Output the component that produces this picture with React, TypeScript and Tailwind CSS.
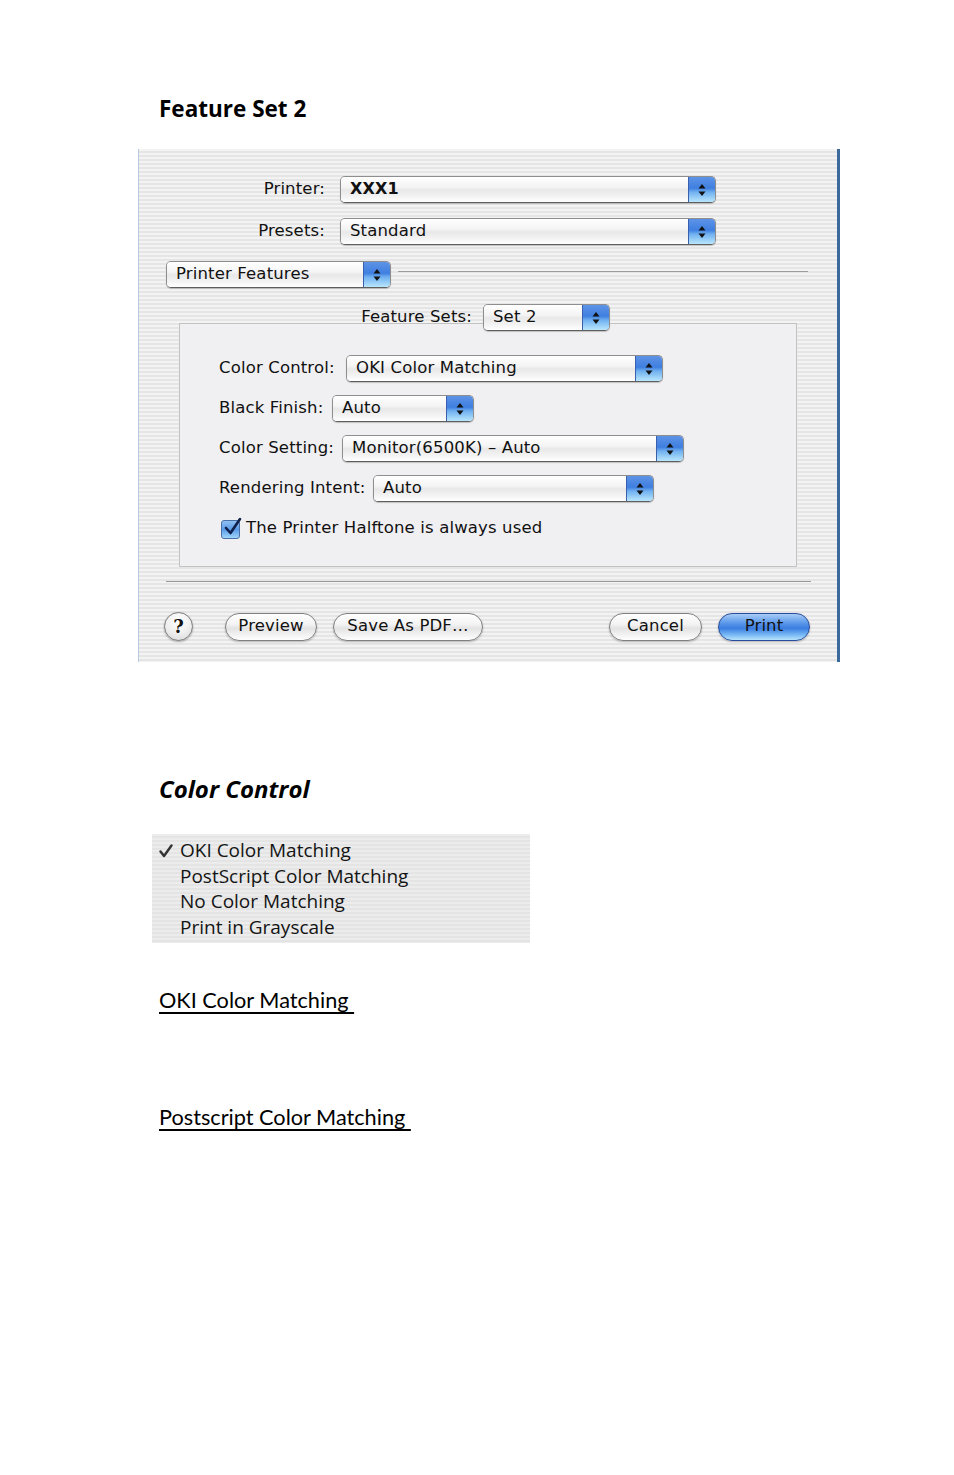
import React from "react";

const stripes =
  "bg-[repeating-linear-gradient(180deg,#f3f3f3_0px,#f3f3f3_2px,#e5e5e5_2px,#e5e5e5_4px)]";

function Arrows() {
  return (
    <svg width="8" height="14" viewBox="0 0 8 14">
      <polygon points="4,1 7.5,5.5 0.5,5.5" fill="#111" />
      <polygon points="4,13 7.5,8.5 0.5,8.5" fill="#111" />
    </svg>
  );
}

function Popup({ text, className, bold }: { text: string; className: string; bold?: boolean }) {
  return (
    <div
      className={
        "flex h-[27px] rounded-[5px] border border-[#8e8e8e] border-b-[#5e5e5e] shadow-[0_1px_1px_rgba(0,0,0,0.2)] overflow-hidden " +
        className
      }
    >
      <div className="flex-1 flex items-center pl-[9px] pb-[1px] bg-[linear-gradient(180deg,#ffffff_0%,#f4f4f4_40%,#e8e8e8_52%,#f4f4f4_80%,#ffffff_100%)]">
        <span className={"whitespace-nowrap " + (bold ? "font-bold text-[16px]" : "")}>{text}</span>
      </div>
      <div className="w-[27px] flex items-center justify-center border-l border-[#3a5fae] bg-[linear-gradient(180deg,#5d93e6_0%,#3f7fe0_45%,#6fb0f0_60%,#b9e6fc_100%)]">
        <Arrows />
      </div>
    </div>
  );
}

function Pill({ text, className, blue }: { text: string; className: string; blue?: boolean }) {
  return (
    <div
      className={
        "h-[28px] rounded-full flex items-center justify-center pb-[1px] whitespace-nowrap shadow-[0_1px_2px_rgba(0,0,0,0.25)] " +
        (blue
          ? "border border-[#2a4c9e] bg-[linear-gradient(180deg,#a9cdf7_0%,#5a97ea_35%,#3a7de0_55%,#78b8f4_80%,#b8e4fc_100%)] "
          : "border border-[#7f7f7f] bg-[linear-gradient(180deg,#ffffff_0%,#f3f3f3_40%,#e3e3e3_55%,#f5f5f5_85%,#ffffff_100%)] ") +
        className
      }
    >
      {text}
    </div>
  );
}

export default function App() {
  return (
    <div className="bg-white w-[954px] h-[1475px] pt-[94px] font-['Open_Sans',sans-serif] text-black">
      <div className="ml-[159px] text-[22.5px] leading-[30px] font-bold">Feature Set 2</div>

      {/* Dialog */}
      <div
        className={
          "mt-[25px] ml-[138px] w-[702px] h-[513px] border-l border-[#b8c8e0] border-r-[3px] border-r-[#3c6a9c] pt-[27px] text-[16.5px] tracking-[0.15px] leading-[20px] text-[#111] font-['DejaVu_Sans',sans-serif] " +
          stripes
        }
      >
        <div className="flex items-center">
          <div className="w-[186px] text-right pb-[2px]">Printer:</div>
          <Popup text="XXX1" bold className="ml-[15px] w-[376px]" />
        </div>
        <div className="flex items-center mt-[15px]">
          <div className="w-[186px] text-right pb-[2px]">Presets:</div>
          <Popup text="Standard" className="ml-[15px] w-[376px]" />
        </div>
        <div className="flex mt-[16px]">
          <Popup text="Printer Features" className="ml-[27px] w-[225px]" />
          <div className="flex-1 ml-[7px] mr-[29px] mt-[10px] h-px bg-[#9d9d9d]" />
        </div>

        <div className="relative z-10 mt-[16px] ml-[40px] w-[618px] flex items-center justify-center">
          <div className="w-[106px] whitespace-nowrap mr-[11px] pb-[2px] flex justify-end">Feature Sets:</div>
          <Popup text="Set 2" className="w-[127px]" />
        </div>

        <div className="-mt-[8px] ml-[40px] w-[618px] h-[244px] border border-[#c2c2c2] bg-[#f0eff1] pt-[31px] pl-[39px]">
          <div className="flex flex-col gap-[13px]">
            <div className="flex items-center">
              <div className="w-[127px] whitespace-nowrap pb-[2px]">Color Control:</div>
              <Popup text="OKI Color Matching" className="w-[317px]" />
            </div>
            <div className="flex items-center">
              <div className="w-[113px] whitespace-nowrap pb-[2px]">Black Finish:</div>
              <Popup text="Auto" className="w-[142px]" />
            </div>
            <div className="flex items-center">
              <div className="w-[123px] whitespace-nowrap pb-[2px]">Color Setting:</div>
              <Popup text="Monitor(6500K) – Auto" className="w-[342px]" />
            </div>
            <div className="flex items-center">
              <div className="w-[154px] whitespace-nowrap pb-[2px]">Rendering Intent:</div>
              <Popup text="Auto" className="w-[281px]" />
            </div>
          </div>
          <div className="flex items-center mt-[16px] ml-[2px]">
            <div className="w-[19px] h-[19px] rounded-[3px] border border-[#4a6ea8] bg-[linear-gradient(180deg,#8fc0f2_0%,#5b9be8_50%,#9fd6fa_100%)] relative">
              <svg className="absolute -top-[4px] left-[1px]" width="20" height="20" viewBox="0 0 20 20">
                <path d="M3 11 L7.5 16 L17 2" stroke="#10204a" strokeWidth="2.6" fill="none" strokeLinecap="round" strokeLinejoin="round" />
              </svg>
            </div>
            <div className="ml-[6px] whitespace-nowrap pb-[2px]">The Printer Halftone is always used</div>
          </div>
        </div>

        <div className="mt-[14px] ml-[27px] w-[645px] h-px bg-[#9a9a9a]" />

        <div className="flex items-center mt-[30px]">
          <div className="ml-[25px] w-[29px] h-[29px] rounded-full border border-[#7a7a7a] shadow-[0_1px_2px_rgba(0,0,0,0.3)] bg-[radial-gradient(circle_at_50%_30%,#ffffff_0%,#f0f0f0_50%,#d6d6d6_100%)] flex items-center justify-center font-['DejaVu_Serif',serif] text-[18px] font-bold">
            ?
          </div>
          <Pill text="Preview" className="ml-[32px] w-[92px]" />
          <Pill text="Save As PDF…" className="ml-[16px] w-[150px]" />
          <Pill text="Cancel" className="ml-[126px] w-[93px]" />
          <Pill text="Print" blue className="ml-[16px] w-[92px]" />
        </div>
      </div>

      <div className="mt-[112px] ml-[159px] text-[24px] leading-[30px] font-bold italic">Color Control</div>

      <div className="mt-[30px] ml-[152px] w-[378px] h-[109px] pt-[4px] text-[19px] leading-[25.7px] text-[#141414] bg-[repeating-linear-gradient(180deg,#ececec_0px,#ececec_2px,#e4e4e4_2px,#e4e4e4_4px)]">
        <div className="flex items-center">
          <svg className="ml-[7px] mr-[7px]" width="14" height="14" viewBox="0 0 14 14">
            <path d="M1.5 7.5 L5 12 L12.5 1.5" stroke="#333" strokeWidth="2.4" fill="none" strokeLinecap="round" strokeLinejoin="round" />
          </svg>
          <span>OKI Color Matching</span>
        </div>
        <div className="pl-[28px]">PostScript Color Matching</div>
        <div className="pl-[28px]">No Color Matching</div>
        <div className="pl-[28px]">Print in Grayscale</div>
      </div>

      <div className="mt-[43px] ml-[159px] text-[21.7px] leading-[28px] font-['Lato',sans-serif]">
        <span className="underline underline-offset-[4px] whitespace-pre">OKI Color Matching </span>
      </div>
      <div className="mt-[89px] ml-[159px] text-[21.7px] leading-[28px] font-['Lato',sans-serif]">
        <span className="underline underline-offset-[4px] whitespace-pre">Postscript Color Matching </span>
      </div>
    </div>
  );
}
